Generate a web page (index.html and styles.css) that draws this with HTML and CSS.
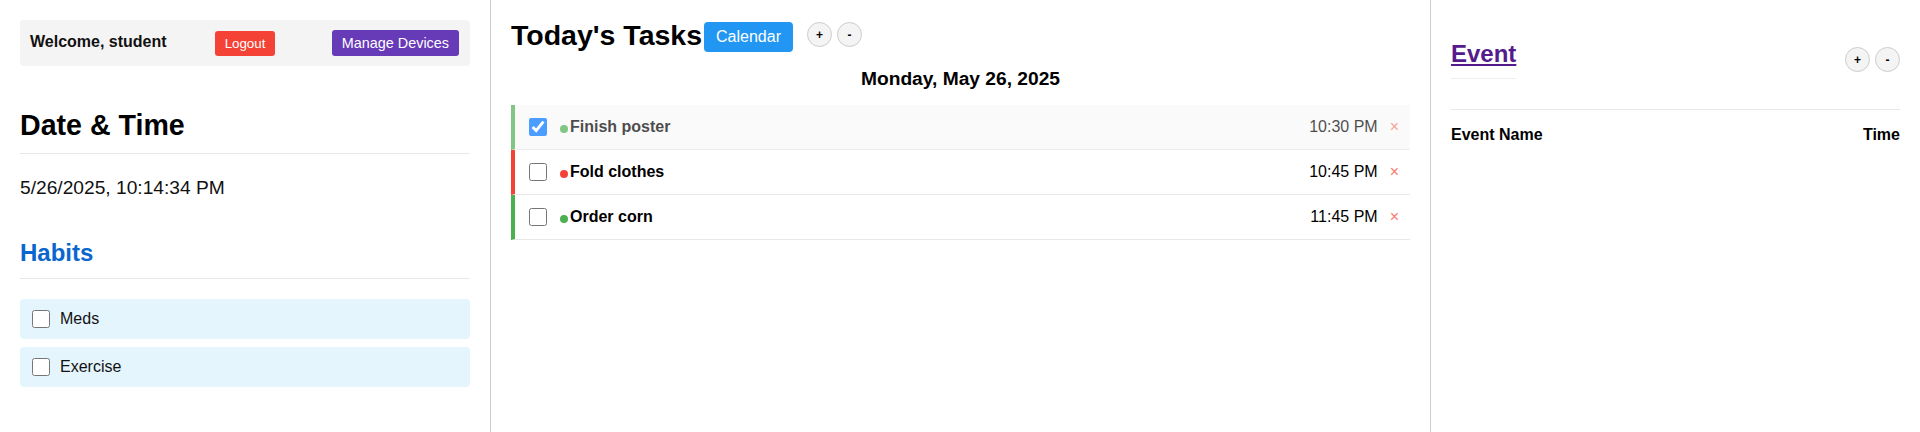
FILE: index.html
```html
<!DOCTYPE html>
<html lang="en">
<head>
<meta charset="utf-8">
<title>Dashboard</title>
<link rel="stylesheet" href="styles.css">
</head>
<body>
<div class="layout">
  <section class="panel panel-left">
    <div class="userbar">
      <span class="welcome">Welcome, student</span>
      <button class="btn btn-logout">Logout</button>
      <button class="btn btn-devices">Manage Devices</button>
    </div>
    <h2 class="section-title">Date &amp; Time</h2>
    <p class="datetime">5/26/2025, 10:14:34 PM</p>
    <h3 class="habits-title">Habits</h3>
    <ul class="habit-list">
      <li class="habit"><input type="checkbox" class="cb"><span>Meds</span></li>
      <li class="habit"><input type="checkbox" class="cb"><span>Exercise</span></li>
    </ul>
  </section>

  <section class="panel panel-middle">
    <div class="tasks-head">
      <h2 class="tasks-title">Today's Tasks</h2>
      <button class="btn btn-calendar">Calendar</button>
      <div class="zoom-btns">
        <button class="circle">+</button>
        <button class="circle">-</button>
      </div>
    </div>
    <div class="today">Monday, May 26, 2025</div>
    <ul class="task-list">
      <li class="task done prio-low">
        <input type="checkbox" class="cb" checked>
        <span class="dot"></span><span class="task-name">Finish poster</span>
        <span class="task-time">10:30 PM</span>
        <span class="del">×</span>
      </li>
      <li class="task prio-high">
        <input type="checkbox" class="cb">
        <span class="dot"></span><span class="task-name">Fold clothes</span>
        <span class="task-time">10:45 PM</span>
        <span class="del">×</span>
      </li>
      <li class="task prio-low">
        <input type="checkbox" class="cb">
        <span class="dot"></span><span class="task-name">Order corn</span>
        <span class="task-time">11:45 PM</span>
        <span class="del">×</span>
      </li>
    </ul>
  </section>

  <section class="panel panel-right">
    <div class="event-head">
      <h2 class="event-title"><a href="#events">Event</a></h2>
      <div class="zoom-btns">
        <button class="circle">+</button>
        <button class="circle">-</button>
      </div>
    </div>
    <div class="event-cols">
      <span>Event Name</span>
      <span>Time</span>
    </div>
  </section>
</div>
</body>
</html>
```

FILE: styles.css
```css
* { box-sizing: border-box; }

html, body {
  margin: 0;
  padding: 0;
  background: #fff;
  font-family: "Liberation Sans", Arial, sans-serif;
  color: #111;
}

.layout {
  display: grid;
  grid-template-columns: 491px 1fr 490px;
  min-height: 100vh;
}

.panel {
  padding: 20px;
}

.panel-left {
  border-right: 1px solid #ccc;
}

.panel-right {
  border-left: 1px solid #ccc;
}

/* ---------- user bar ---------- */
.userbar {
  display: flex;
  align-items: center;
  background: #f4f4f4;
  border-radius: 4px;
  height: 46px;
  padding: 0 11px 0 10px;
}

.welcome {
  font-weight: bold;
  font-size: 16px;
  margin-top: -3px;
  color: #111;
}

.btn {
  border: none;
  color: #fff;
  font-family: "Liberation Sans", Arial, sans-serif;
  border-radius: 3px;
  cursor: pointer;
}

.btn-logout {
  background: #f44336;
  font-size: 13.33px;
  height: 25px;
  padding: 0 10px;
  margin-top: 1px;
  margin-left: 48px;
}

.btn-devices {
  background: #673ab7;
  font-size: 14.4px;
  height: 26px;
  padding: 0 10px;
  margin-left: auto;
}

/* ---------- left content ---------- */
.section-title {
  font-size: 28.6px;
  font-weight: bold;
  margin: 43px 0 0;
  padding-bottom: 11px;
  border-bottom: 1px solid #e8e8e8;
  color: #000;
}

.datetime {
  font-size: 19.2px;
  margin: 23px 0 0;
}

.habits-title {
  font-size: 24px;
  font-weight: bold;
  color: #0a66cf;
  margin: 40px 0 0;
  padding-bottom: 11px;
  border-bottom: 1px solid #e8e8e8;
}

.habit-list {
  list-style: none;
  margin: 20px 0 0;
  padding: 0;
  display: flex;
  flex-direction: column;
  gap: 8px;
}

.habit {
  display: flex;
  align-items: center;
  gap: 10px;
  height: 40px;
  padding: 0 12px;
  background: #e5f5fd;
  border-radius: 4px;
  font-size: 16px;
}

.cb {
  width: 18px;
  height: 18px;
  margin: 0;
  flex: none;
}

/* ---------- tasks ---------- */
.tasks-head {
  display: flex;
  align-items: flex-start;
}

.tasks-title {
  font-size: 28.5px;
  font-weight: bold;
  margin: -1px 0 0;
  color: #000;
  line-height: 32px;
}

.btn-calendar {
  background: #2196f3;
  font-size: 16px;
  height: 30px;
  padding: 0 12px;
  border-radius: 4px;
  margin-left: 2px;
  margin-top: 2px;
}

.zoom-btns {
  display: flex;
  gap: 5px;
}

.tasks-head .zoom-btns {
  margin-left: 14px;
  margin-top: 2px;
}

.circle {
  width: 25px;
  height: 25px;
  border-radius: 50%;
  border: 1px solid #ccc;
  background: #f4f4f4;
  color: #000;
  font-family: "Liberation Sans", Arial, sans-serif;
  font-size: 12px;
  font-weight: bold;
  padding: 0;
  cursor: pointer;
}

.today {
  text-align: center;
  font-weight: bold;
  font-size: 19.2px;
  margin-top: 16px;
  color: #000;
}

.task-list {
  list-style: none;
  margin: 15px 0 0;
  padding: 0;
}

.task {
  display: flex;
  align-items: center;
  height: 45px;
  padding: 0 11px 0 14px;
  border-left: 4px solid #4caf50;
  border-bottom: 1px solid #e8e8e8;
  background: #fff;
  font-size: 16px;
}

.task.prio-high { border-left-color: #f44336; }
.task.prio-low { border-left-color: #4caf50; }

.task.done {
  opacity: 0.7;
  background: #f8f8f8;
}

.dot {
  width: 8px;
  height: 8px;
  border-radius: 50%;
  background: #4caf50;
  margin-left: 13px;
  margin-right: 2px;
  margin-top: 3px;
}

.prio-high .dot { background: #f44336; }

.task-name {
  font-weight: bold;
  color: #000;
}

.task-time {
  margin-left: auto;
  color: #000;
}

.del {
  color: #f77a72;
  font-size: 16px;
  margin-left: 12px;
}

/* ---------- events ---------- */
.event-head {
  display: flex;
  align-items: center;
  justify-content: space-between;
  margin-top: 20px;
}

.event-title {
  font-size: 24px;
  margin: 0;
  padding-bottom: 10px;
  border-bottom: 1px solid #eee;
  line-height: 28px;
}

.event-title a {
  color: #551a8b;
}

.event-cols {
  display: flex;
  justify-content: space-between;
  font-weight: bold;
  font-size: 16px;
  margin-top: 30px;
  padding-top: 16px;
  border-top: 1px solid #e8e8e8;
  color: #000;
}
```
